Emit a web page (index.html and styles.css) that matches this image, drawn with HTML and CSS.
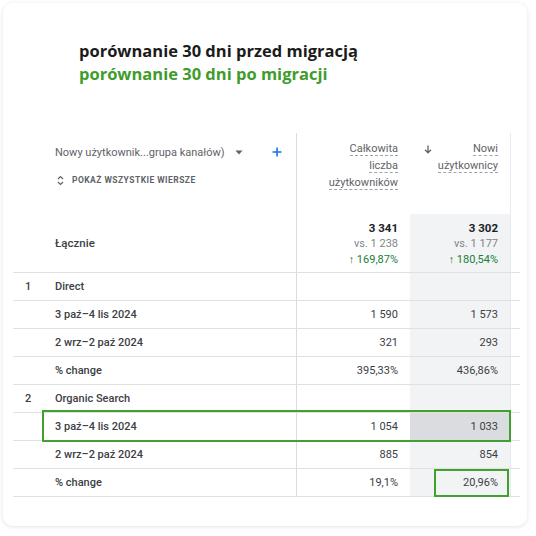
FILE: index.html
```html
<!DOCTYPE html>
<html lang="pl">
<head>
<meta charset="utf-8">
<link rel="stylesheet" href="styles.css">
</head>
<body>
<div class="card">
  <div class="titles">
    <p class="t1">porównanie 30 dni przed migracją</p>
    <p class="t2">porównanie 30 dni po migracji</p>
  </div>
  <div class="table">
    <div class="head">
      <div class="c1 dimcell">
        <div class="dim">
          <span class="dimname">Nowy użytkownik...grupa kanałów)</span>
          <svg class="caret" width="8" height="5" viewBox="0 0 8 5"><path d="M0.5 0.5h7L4 4.5z" fill="#5f6368"/></svg>
          <svg class="plus" width="10" height="10" viewBox="0 0 10 10"><path d="M5 0.5v9M0.5 5h9" stroke="#1a73e8" stroke-width="1.6"/></svg>
        </div>
        <div class="showall">
          <svg width="7" height="11" viewBox="0 0 7 11"><path d="M1 4l2.5-2.5L6 4M1 7l2.5 2.5L6 7" fill="none" stroke="#5f6368" stroke-width="1.2"/></svg>
          <span>POKAŻ WSZYSTKIE WIERSZE</span>
        </div>
      </div>
      <div class="c2 hdr"><span>Całkowita</span><span>liczba</span><span>użytkowników</span></div>
      <div class="c3 hdr sort">
        <svg class="arrow" width="8" height="9" viewBox="0 0 8 9"><path d="M4 0.5v7M1 4.8L4 7.8 7 4.8" fill="none" stroke="#5f6368" stroke-width="1.3"/></svg>
        <div class="hdrtxt"><span>Nowi</span><span>użytkownicy</span></div>
      </div>
      <div class="c4"></div>
    </div>
    <div class="totals">
      <div class="c1 total-label">Łącznie</div>
      <div class="c2 tot"><b>3 341</b><span class="vs">vs. 1 238</span><span class="up">↑ 169,87%</span></div>
      <div class="c3 tot shade"><b>3 302</b><span class="vs">vs. 1 177</span><span class="up">↑ 180,54%</span></div>
      <div class="c4"></div>
    </div>
    <div class="row">
      <div class="c1"><span class="num">1</span><span class="lbl">Direct</span></div>
      <div class="c2 val"></div><div class="c3 val shade"></div><div class="c4"></div>
    </div>
    <div class="row">
      <div class="c1"><span class="num"></span><span class="lbl">3 paź–4 lis 2024</span></div>
      <div class="c2 val">1 590</div><div class="c3 val shade">1 573</div><div class="c4"></div>
    </div>
    <div class="row">
      <div class="c1"><span class="num"></span><span class="lbl">2 wrz–2 paź 2024</span></div>
      <div class="c2 val">321</div><div class="c3 val shade">293</div><div class="c4"></div>
    </div>
    <div class="row">
      <div class="c1"><span class="num"></span><span class="lbl">% change</span></div>
      <div class="c2 val">395,33%</div><div class="c3 val shade">436,86%</div><div class="c4"></div>
    </div>
    <div class="row">
      <div class="c1"><span class="num">2</span><span class="lbl">Organic Search</span></div>
      <div class="c2 val"></div><div class="c3 val shade"></div><div class="c4"></div>
    </div>
    <div class="row">
      <div class="c1"><span class="num"></span><span class="lbl">3 paź–4 lis 2024</span></div>
      <div class="c2 val">1 054</div><div class="c3 val hover">1 033</div><div class="c4"></div>
    </div>
    <div class="row">
      <div class="c1"><span class="num"></span><span class="lbl">2 wrz–2 paź 2024</span></div>
      <div class="c2 val">885</div><div class="c3 val shade">854</div><div class="c4"></div>
    </div>
    <div class="row">
      <div class="c1"><span class="num"></span><span class="lbl">% change</span></div>
      <div class="c2 val">19,1%</div><div class="c3 val shade">20,96%</div><div class="c4"></div>
    </div>
    <div class="mark mark-row"></div>
    <div class="mark mark-cell"></div>
  </div>
</div>
</body>
</html>
```
FILE: styles.css
```css
* { box-sizing: border-box; }
html, body { margin: 0; padding: 0; background: #fff; }
body { font-family: Roboto, "Noto Sans", sans-serif; }

.card {
  margin: 3px;
  width: 524px;
  height: 523px;
  border-radius: 10px;
  background: #fff;
  box-shadow: 0 1px 5px rgba(0,0,0,0.11);
  overflow: hidden;
}

.titles { padding: 36px 0 0 76px; }
.titles p {
  margin: 0;
  font-family: "Open Sans", sans-serif;
  font-weight: 700;
  font-size: 16.5px;
  line-height: 23px;
  letter-spacing: 0;
}
.t1 { color: #1b1b1b; }
.t2 { color: #3f9c2c; }

.table {
  position: relative;
  margin: 48px 0 0 10px;
  width: 507px;
}

.head, .totals, .row {
  display: grid;
  grid-template-columns: 283px 114px 100px 1fr;
}
.c2 { border-left: 1px solid #dadce0; }
.c4 { border-left: 1px solid #e8eaed; }

.head { height: 81px; }
.dimcell { padding: 11px 0 0 42px; color: #5f6368; }
.dim { display: flex; align-items: center; height: 16px; }
.dimname { font-size: 11px; }
.caret { margin-left: 10px; }
.plus { margin-left: 29px; }
.showall {
  display: flex; align-items: center; margin-top: 14px; height: 12px;
  font-size: 8.5px; font-weight: 700; letter-spacing: 0.45px; color: #5f6368;
}
.showall svg { margin: 0 8px 0 2px; }

.hdr {
  display: flex; flex-direction: column; align-items: flex-end;
  padding: 8px 12px 0 0;
  font-size: 11px; line-height: 16px; color: #5f6368;
}
.hdr span, .hdrtxt span {
  line-height: 13px; margin-bottom: 2px; padding-top: 1px;
  border-bottom: 1px dashed #a0a4a8;
}
.sort { flex-direction: row; justify-content: space-between; align-items: flex-start; padding-left: 14px; }
.sort .arrow { margin-top: 4px; }
.hdrtxt { display: flex; flex-direction: column; align-items: flex-end; }

.totals { height: 59px; border-bottom: 1px solid #e0e0e0; }
.total-label {
  display: flex; align-items: center; padding-left: 42px;
  font-size: 11.5px; font-weight: 500; color: #3c4043;
}
.tot {
  display: flex; flex-direction: column; align-items: flex-end;
  padding: 6px 12px 0 0; font-size: 11px; line-height: 16px;
}
.tot b { font-weight: 700; color: #202124; font-size: 11.5px; }
.tot .vs { color: #80868b; }
.tot .up { color: #188038; }

.shade { background: #f1f3f4; }
.hover { background: #dadcdf; }

.row { height: 28px; border-bottom: 1px solid #e0e0e0; }
.row .c1 {
  display: flex; align-items: center;
  font-size: 11px; font-weight: 500; color: #3c4043;
}
.num { width: 42px; padding-left: 12px; }
.val {
  display: flex; align-items: center; justify-content: flex-end;
  padding-right: 12px; font-size: 11px; color: #3c4043;
}

.mark { position: absolute; border: 2px solid #42a02f; }
.mark-row { left: 29px; top: 277px; width: 469px; height: 32px; }
.mark-cell { left: 421px; top: 336px; width: 75px; height: 28px; }
```
